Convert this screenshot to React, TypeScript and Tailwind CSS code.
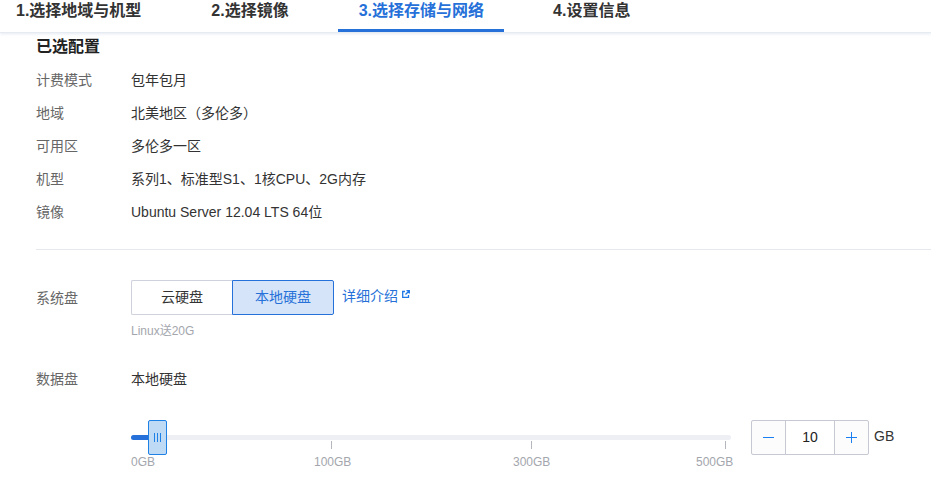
const font = "[font-family:'Liberation_Sans','Noto_Sans_CJK_SC',sans-serif]";

const tabs = ['1.选择地域与机型', '2.选择镜像', '3.选择存储与网络', '4.设置信息'];

const summary = [
  ['计费模式', '包年包月'],
  ['地域', '北美地区（多伦多）'],
  ['可用区', '多伦多一区'],
  ['机型', '系列1、标准型S1、1核CPU、2G内存'],
  ['镜像', 'Ubuntu Server 12.04 LTS 64位'],
];

const ticks = [
  { label: '100GB', width: 'w-[201px]' },
  { label: '300GB', width: 'w-[200px]' },
  { label: '500GB', width: 'w-[194px]' },
];

const ExternalIcon = () => (
  <svg width="8" height="8" viewBox="0 0 8 8" fill="none" stroke="#1f78e6" strokeWidth="1.3" className="mb-[5px] ml-[4px]">
    <path d="M3 1.5H.7v5.8h5.8V5" />
    <path d="M4.5.7h2.8V3.5M7.3.7 3.5 4.5" />
  </svg>
);

const App = () => {
  return (
    <div className={`h-[486px] w-[931px] overflow-hidden bg-white text-[14px] text-[#333] ${font}`}>
      {/* Steps */}
      <div className="flex h-[33px] gap-[28px] border-b border-[#e6ebf2] shadow-[0_1px_3px_rgba(120,150,190,0.2)]">
        {tabs.map((tab, i) => (
          <div
            key={tab}
            className={`h-[32px] whitespace-nowrap border-b-[3px] pl-[21px] text-[16px] font-bold leading-[22px] first:ml-[-5px] ${
              i === 2 ? 'border-[#2670d9] pr-[20px] text-[#2670d9]' : 'border-transparent pr-[21px] text-[#333]'
            }`}
          >
            {tab}
          </div>
        ))}
      </div>

      <div className="pl-[36px]">
        <h2 className="mt-[3px] text-[16px] font-bold leading-[22px] text-[#222]">已选配置</h2>

        <div className="mt-[6px] flex flex-col">
          {summary.map(([label, value]) => (
            <div key={label} className="flex h-[33px] items-center">
              <span className="w-[95px] text-[#666]">{label}</span>
              <span>{value}</span>
            </div>
          ))}
        </div>

        <div className="mt-[20px] border-t border-[#e5e8ed]" />

        {/* System disk */}
        <div className="mt-[30px] flex">
          <span className="w-[95px] pt-[9px] leading-[18px] text-[#666]">系统盘</span>
          <div>
            <div className="flex items-center">
              <button className="h-[35px] w-[101px] rounded-l-[2px] border border-r-0 border-[#cfd2dc] bg-white text-[#333]">
                云硬盘
              </button>
              <button className="h-[35px] w-[102px] rounded-r-[2px] border border-[#2670d9] bg-[#d5e4f8] text-[#2670d9]">
                本地硬盘
              </button>
              <a className="ml-[8px] flex items-center pb-[3px] text-[#2670d9]">
                详细介绍
                <ExternalIcon />
              </a>
            </div>
            <p className="mt-[8px] text-[12px] leading-[16px] text-[#a3a6ad]">Linux送20G</p>
          </div>
        </div>

        {/* Data disk */}
        <div className="mt-[31px] flex h-[18px] items-center">
          <span className="w-[95px] text-[#666]">数据盘</span>
          <span>本地硬盘</span>
        </div>

        <div className="mt-[32px] flex pl-[95px]">
          <div className="w-[600px]">
            <div className="relative flex h-[35px] items-center">
              <div className="h-[5px] w-full rounded-full bg-[#edeff5]" />
              <div className="absolute left-0 top-[15px] h-[5px] w-[20px] rounded-l-full bg-[#2670d9]" />
              <div className="absolute left-[17px] top-0 flex h-[35px] w-[19px] items-center justify-center gap-[2px] rounded-[2px] border border-[#1f80e6] bg-[#bfdaf5]">
                <i className="h-[9px] w-px bg-[#1f80e6]" />
                <i className="h-[9px] w-px bg-[#1f80e6]" />
                <i className="h-[9px] w-px bg-[#1f80e6]" />
              </div>
            </div>
            <div className="flex">
              {ticks.map((tick) => (
                <div key={tick.label} className={`flex h-[9px] justify-end ${tick.width}`}>
                  <i className="mt-[-14px] h-[8px] w-px bg-[#b4b7bd]" />
                </div>
              ))}
            </div>
            <div className="mt-[-11px] flex whitespace-nowrap text-[12px] leading-[18px] text-[#a3a6ad]">
              <span className="w-[183px] shrink-0">0GB</span>
              <span className="w-[199px] shrink-0">100GB</span>
              <span className="w-[183px] shrink-0">300GB</span>
              <span className="shrink-0">500GB</span>
            </div>
          </div>

          <div className="ml-[20px] flex h-[35px] w-[118px] rounded-[2px] border border-[#c6c8d2] bg-[#fcfcfd]">
            <button className="flex w-[33px] items-center justify-center">
              <i className="block h-px w-[11px] bg-[#1a7ff0]" />
            </button>
            <div className="flex w-[50px] items-center justify-center border-x border-[#c6c8d2] bg-white text-[14px] text-[#222]">10</div>
            <button className="relative flex flex-1 items-center justify-center">
              <i className="block h-px w-[11px] bg-[#1a7ff0]" />
              <i className="absolute h-[11px] w-px bg-[#1a7ff0]" />
            </button>
          </div>
          <span className="ml-[5px] pt-[7px] leading-[18px]">GB</span>
        </div>
      </div>
    </div>
  );
};

export default App;
